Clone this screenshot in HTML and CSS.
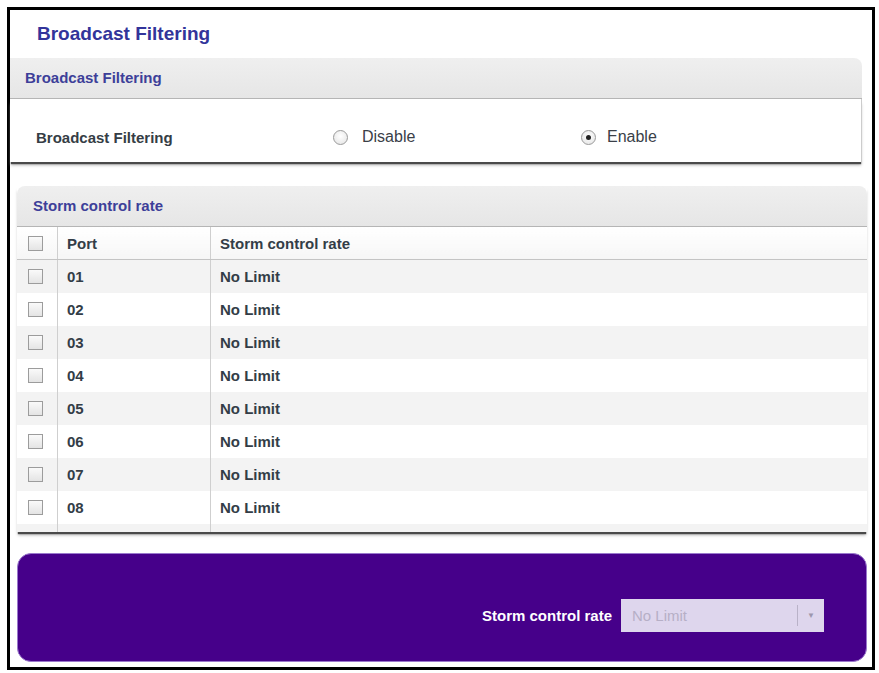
FILE: index.html
```html
<!DOCTYPE html>
<html lang="en">
<head>
  <meta charset="UTF-8">
  <title>Broadcast Filtering</title>
  <link rel="stylesheet" href="styles.css">
</head>
<body>
  <div class="frame">
    <h2 class="page-title">Broadcast Filtering</h2>

    <div class="panel panel-filter">
      <div class="panel-head">Broadcast Filtering</div>
      <div class="panel-body">
        <span class="field-label">Broadcast Filtering</span>
        <label class="radio radio-disable"><span class="dot"></span>Disable</label>
        <label class="radio radio-enable"><span class="dot checked"></span>Enable</label>
      </div>
    </div>

    <div class="panel panel-storm">
      <div class="panel-head">Storm control rate</div>
      <table class="ports">
        <thead>
          <tr>
            <th class="col-check"><span class="box"></span></th>
            <th class="col-port">Port</th>
            <th>Storm control rate</th>
          </tr>
        </thead>
        <tbody>
          <tr><td class="col-check"><span class="box"></span></td><td>01</td><td>No Limit</td></tr>
          <tr><td class="col-check"><span class="box"></span></td><td>02</td><td>No Limit</td></tr>
          <tr><td class="col-check"><span class="box"></span></td><td>03</td><td>No Limit</td></tr>
          <tr><td class="col-check"><span class="box"></span></td><td>04</td><td>No Limit</td></tr>
          <tr><td class="col-check"><span class="box"></span></td><td>05</td><td>No Limit</td></tr>
          <tr><td class="col-check"><span class="box"></span></td><td>06</td><td>No Limit</td></tr>
          <tr><td class="col-check"><span class="box"></span></td><td>07</td><td>No Limit</td></tr>
          <tr><td class="col-check"><span class="box"></span></td><td>08</td><td>No Limit</td></tr>
          <tr class="filler"><td class="col-check"></td><td></td><td></td></tr>
        </tbody>
      </table>
    </div>

    <div class="edit-bar">
      <span class="edit-label">Storm control rate</span>
      <div class="select">
        <span class="select-text">No Limit</span>
        <span class="select-arrow">&#9660;</span>
      </div>
    </div>
  </div>
</body>
</html>
```

FILE: styles.css
```css
body {
  margin: 0;
  font-family: "Liberation Sans", Arial, sans-serif;
  background: #fff;
}
.frame {
  margin: 7px 0 0 7px;
  width: 862px;
  height: 657px;
  border: 3px solid #000;
}
.page-title {
  margin: 0;
  height: 48px;
  line-height: 48px;
  padding-left: 27px;
  font-size: 19px;
  color: #32349a;
}

/* panels */
.panel-head {
  height: 40px;
  line-height: 40px;
  font-size: 15px;
  font-weight: bold;
  color: #3d3f99;
  background: linear-gradient(#efefef, #e6e6e6);
  border-bottom: 1px solid #b5b5b5;
  border-top-right-radius: 8px;
}
.panel-filter { width: 852px; }
.panel-filter .panel-head { padding-left: 15px; }
.panel-body {
  position: relative;
  height: 63px;
  background: #fff;
  border-right: 1px solid #ccc;
  box-shadow: 0 3px 1px -1px #4a4a4a, 0 4px 3px -1px #aaa;
  font-size: 15px;
  color: #333;
}
.field-label {
  position: absolute;
  left: 26px;
  top: 30px;
  font-weight: bold;
  color: #353d45;
}
.radio {
  position: absolute;
  top: 29px;
  display: flex;
  align-items: center;
  gap: 14px;
  font-size: 16px;
  color: #3a4048;
}
.radio-disable { left: 323px; }
.radio-enable { left: 571px; gap: 11px; }
.dot {
  width: 13px;
  height: 13px;
  border-radius: 50%;
  border: 1px solid #9a9a9a;
  background: radial-gradient(circle at 50% 40%, #fff, #e2e2e2);
  position: relative;
}
.dot.checked::after {
  content: "";
  position: absolute;
  left: 4px;
  top: 4px;
  width: 5px;
  height: 5px;
  border-radius: 50%;
  background: #222;
}

.panel-storm {
  width: 850px;
  margin: 24px 0 0 7px;
  box-shadow: 0 3px 1px -1px #4a4a4a, 0 4px 3px -1px #aaa;
}
.panel-storm .panel-head {
  padding-left: 16px;
  border-top-left-radius: 8px;
}

/* port table */
.ports {
  width: 100%;
  border-collapse: collapse;
  font-size: 15px;
  font-weight: bold;
  color: #333d47;
  background: #fff;
}
.ports th, .ports td {
  height: 33px;
  padding: 0 0 0 9px;
  text-align: left;
  border-left: 1px solid #cfcfcf;
}
.ports th:first-child, .ports td:first-child { border-left: none; }
.ports th {
  height: 32px;
  border-bottom: 1px solid #c4c4c4;
  background: linear-gradient(#fff, #f6f6f6);
}
.ports tbody tr:nth-child(odd) { background: #f3f3f3; }
.ports tr.filler td { height: 8px; }
.col-check {
  width: 29px;
  padding-left: 11px !important;
}
.col-port { width: 143px; }
.box {
  display: block;
  width: 13px;
  height: 13px;
  border: 1px solid #9c9c9c;
  background: linear-gradient(#fafafa, #e4e4e4);
}

/* bottom edit bar */
.edit-bar {
  width: 850px;
  height: 109px;
  box-sizing: border-box;
  margin: 21px 0 0 7px;
  padding-top: 16px;
  background: #46008a;
  border: 1px solid #9a78cc;
  border-radius: 14px;
  display: flex;
  align-items: center;
  justify-content: flex-end;
}
.edit-label {
  color: #fff;
  font-size: 15px;
  font-weight: bold;
  margin-right: 9px;
}
.select {
  width: 203px;
  height: 33px;
  margin-right: 42px;
  background: #ded6ed;
  display: flex;
  align-items: center;
}
.select-text {
  flex: 1;
  padding-left: 11px;
  font-size: 15px;
  color: #b6afc6;
}
.select-arrow {
  width: 26px;
  height: 21px;
  line-height: 21px;
  border-left: 1px solid #b9b2c8;
  text-align: center;
  font-size: 8px;
  color: #9d97ad;
}
```
